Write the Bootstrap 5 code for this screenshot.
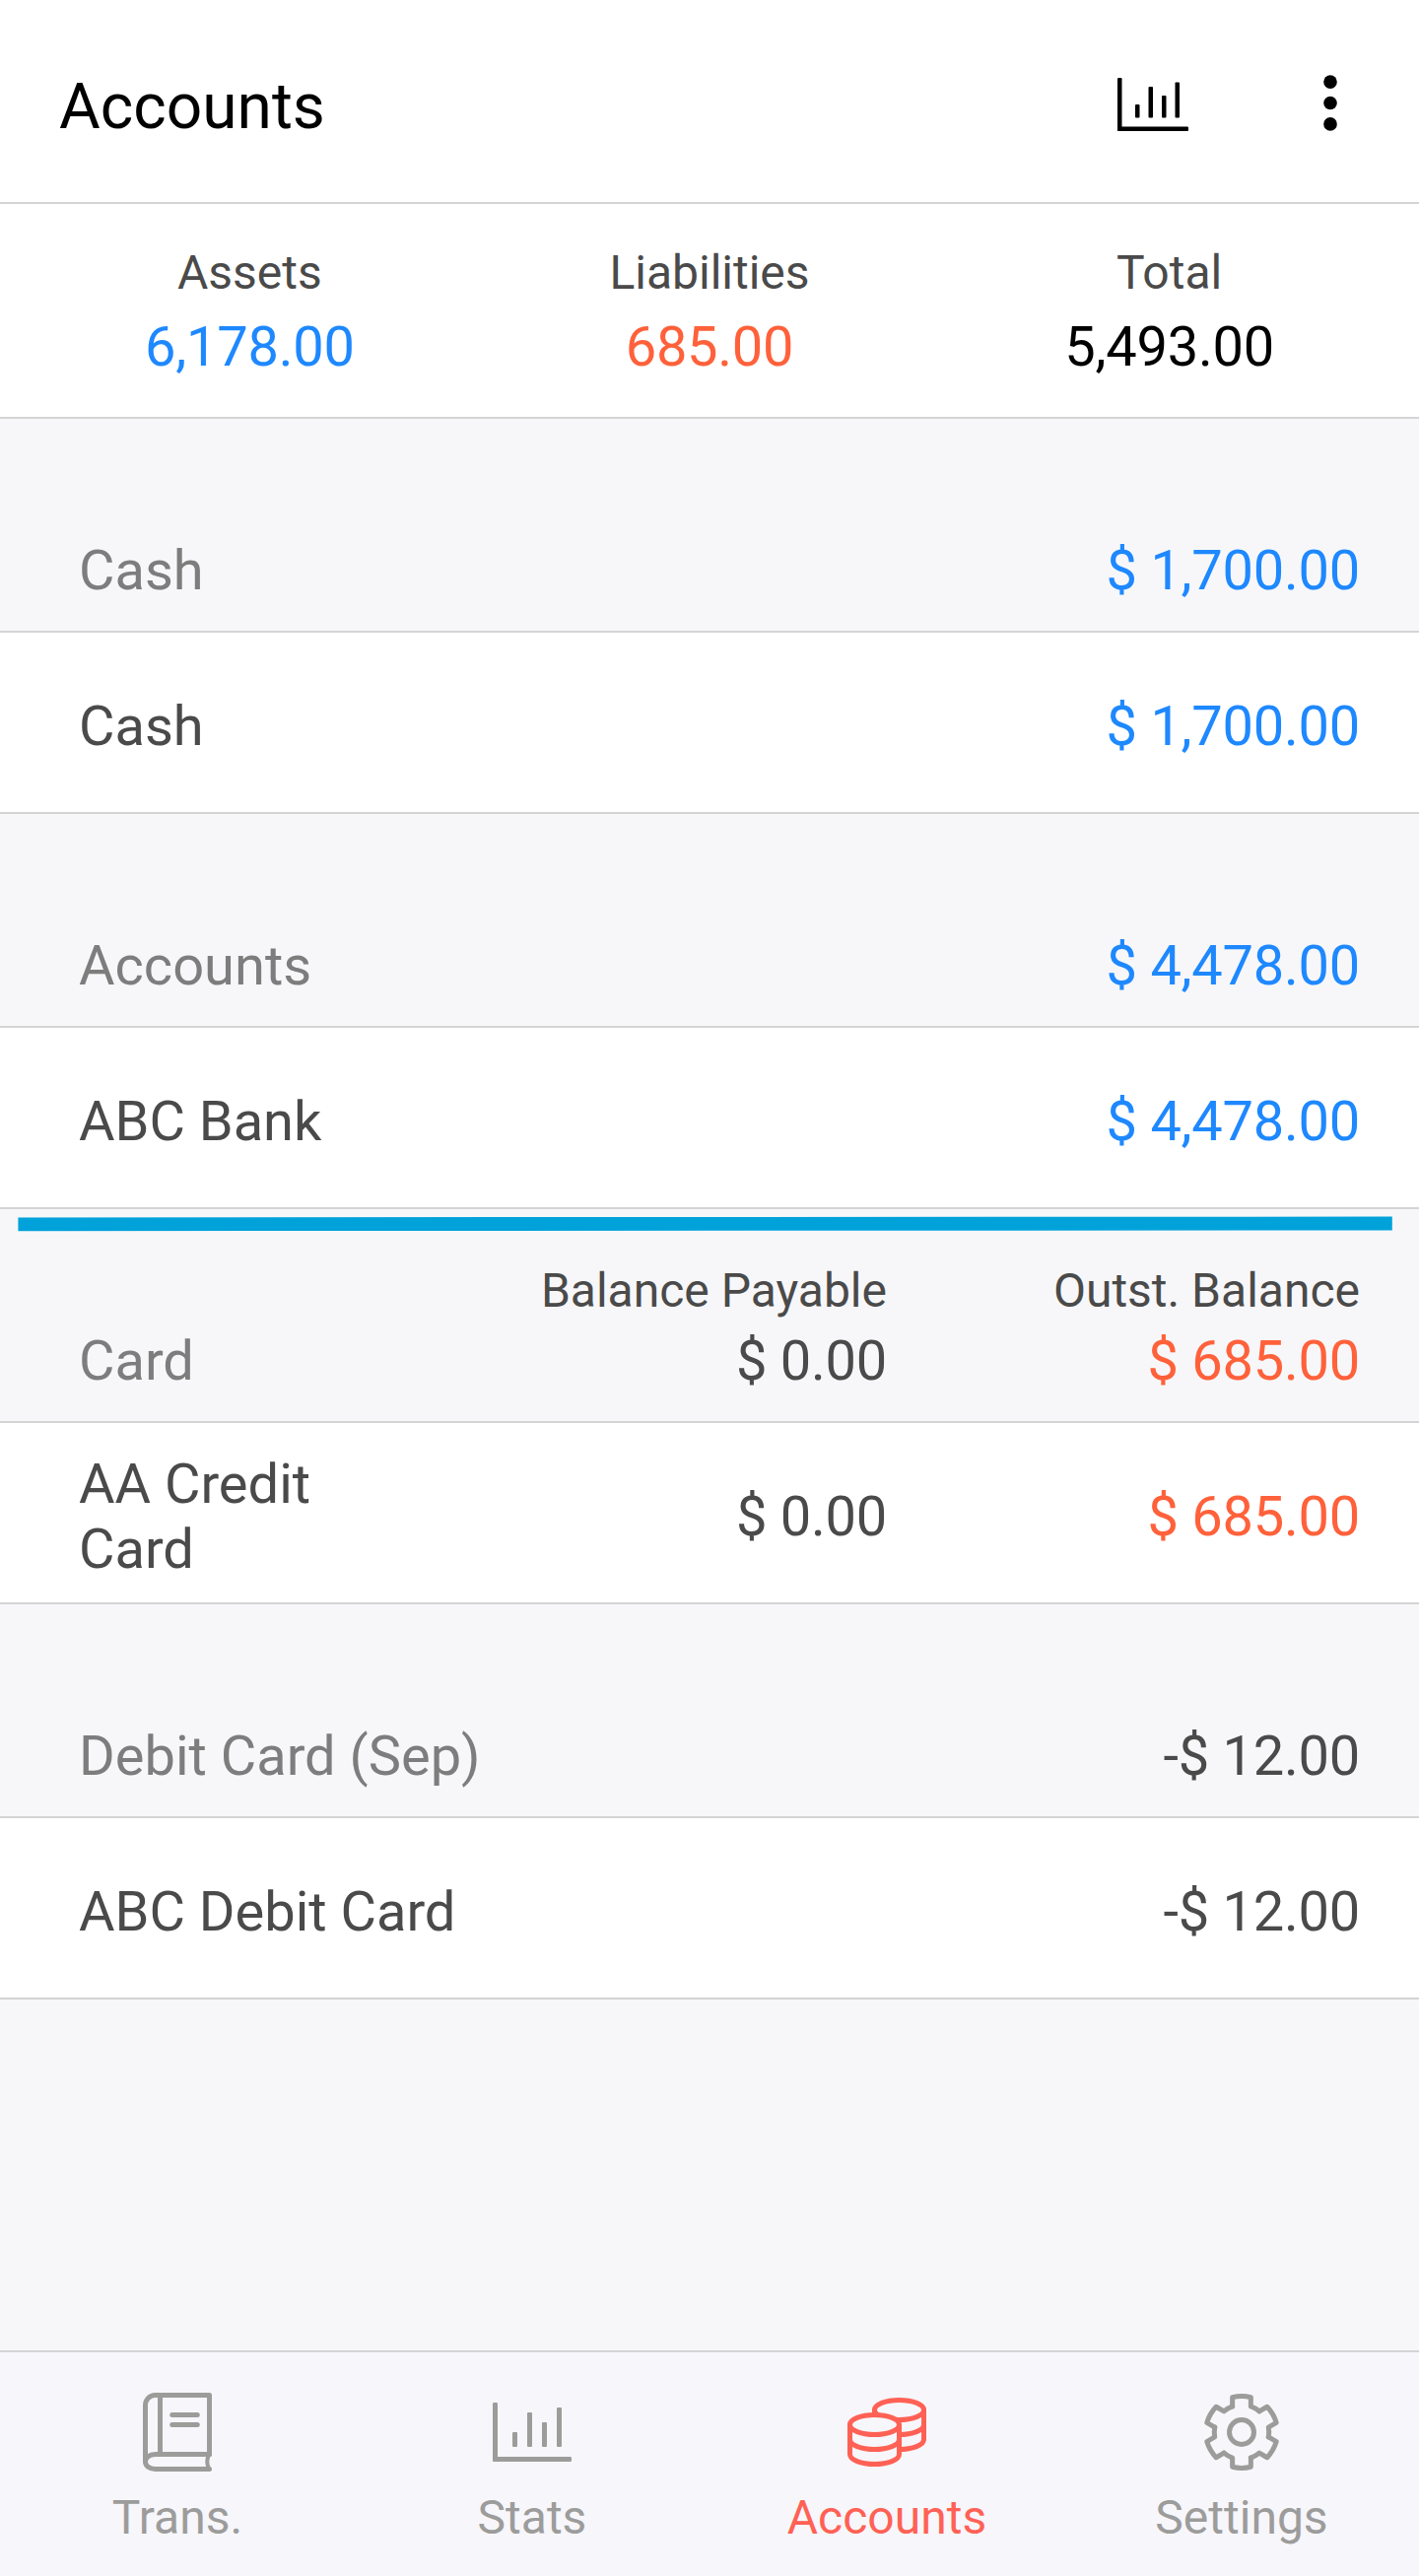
<!DOCTYPE html>
<html lang="en">
<head>
<meta charset="utf-8">
<meta name="viewport" content="width=device-width, initial-scale=1">
<title>Accounts</title>
<link href="https://cdn.jsdelivr.net/npm/bootstrap@5.3.0/dist/css/bootstrap.min.css" rel="stylesheet">
<style>
  :root { --line: #d4d4d5; --ink: #4a4a4a; --muted: #7d7d7d; --blue: #1e88ff; --orange: #ff613b; --coral: #ff6155; --tab: #9c9c9b; --tabbar: #f7f6fb; }
  body { font-family: Roboto, "Liberation Sans", sans-serif; font-size: 56px; line-height: 66px; color: var(--ink); background: #f7f7f9; }
  svg { display: block; }
  .screen { height: 2614px; overflow: hidden; }
  .ruled { border-bottom: 2px solid var(--line); }
  .top-bar { height: 207px; padding-left: 60px; color: #000; }
  .top-title { font-size: 64px; line-height: 75px; font-weight: 400; padding-top: 11px; }
  .top-action { width: 180px; color: #000; }
  .top-action.chart { padding-top: 7px; }
  .top-action.more { padding-top: 3px; }
  .totals { height: 218px; padding: 42px 20px 0; }
  .caption { font-size: 48px; line-height: 56px; white-space: nowrap; }
  .totals .caption { margin-bottom: 14px; }
  .group-head { height: 217px; padding: 0 60px 28px 80px; color: var(--muted); }
  .entry { height: 184px; padding: 8px 60px 0 80px; }
  .name-slot { width: 340px; }
  .sum-slot { width: 480px; }
  .sum-slot .caption { margin-bottom: 10px; }
  .amount { letter-spacing: -.25px; }
  .blue { color: var(--blue); }
  .orange { color: var(--orange); }
  .ink { color: var(--ink); }
  .divider-mark { left: 18px; top: 7px; }
  .tab-bar { height: 229px; border-top: 2px solid var(--line); background: var(--tabbar); }
  .tab-item { padding-top: 41px; gap: 19px; color: var(--tab); font-size: 48px; line-height: 56px; text-decoration: none; }
  .tab-item.current { color: var(--coral); }
</style>
<script src="https://cdn.jsdelivr.net/npm/bootstrap@5.3.0/dist/js/bootstrap.bundle.min.js"></script>
</head>
<body>
<svg width="0" height="0" class="position-absolute" aria-hidden="true">
  <symbol id="chart" viewBox="0 0 16 12">
    <g fill="currentColor"><rect width="1" height="12" rx=".25"/><rect y="11" width="16" height="1" rx=".25"/><rect x="4" y="6" width="1" height="3" rx=".2"/><rect x="7" y="2" width="1" height="7" rx=".2"/><rect x="10" y="4" width="1" height="5" rx=".2"/><rect x="13" y="1" width="1" height="8" rx=".2"/></g>
  </symbol>
</svg>
<div class="screen d-flex flex-column">
  <header class="top-bar ruled bg-white d-flex align-items-center">
    <h1 class="top-title mb-0 me-auto">Accounts</h1>
    <div class="top-action chart d-flex justify-content-center"><svg width="72" height="54"><use href="#chart"/></svg></div>
    <div class="top-action more d-flex justify-content-center">
      <svg width="14" height="57" viewBox="0 0 14 57" fill="currentColor"><circle cx="7" cy="7.1" r="6.8"/><circle cx="7" cy="28.5" r="6.8"/><circle cx="7" cy="49.9" r="6.8"/></svg>
    </div>
  </header>

  <section class="totals ruled bg-white">
    <div class="row g-0 text-center">
      <div class="col-4"><div class="caption">Assets</div><div class="amount blue">6,178.00</div></div>
      <div class="col-4"><div class="caption">Liabilities</div><div class="amount orange">685.00</div></div>
      <div class="col-4"><div class="caption">Total</div><div class="amount text-black">5,493.00</div></div>
    </div>
  </section>

  <main class="flex-grow-1">
    <section>
      <div class="group-head ruled d-flex align-items-end justify-content-between"><span>Cash</span><span class="amount blue">$ 1,700.00</span></div>
      <div class="entry ruled bg-white d-flex align-items-center justify-content-between"><span>Cash</span><span class="amount blue">$ 1,700.00</span></div>
    </section>
    <section>
      <div class="group-head ruled d-flex align-items-end justify-content-between"><span>Accounts</span><span class="amount blue">$ 4,478.00</span></div>
      <div class="entry ruled bg-white d-flex align-items-center justify-content-between"><span>ABC Bank</span><span class="amount blue">$ 4,478.00</span></div>
    </section>
    <section class="position-relative">
      <svg class="divider-mark position-absolute" width="1396" height="16" viewBox="0 0 1396 16"><path d="M.4 1.4 1394.8.6V14.4L.4 15.2z" fill="#01a2da"/></svg>
      <div class="group-head ruled d-flex align-items-end">
        <div class="name-slot">Card</div>
        <div class="sum-slot text-end ink"><div class="caption">Balance Payable</div><div class="amount">$ 0.00</div></div>
        <div class="sum-slot text-end ink"><div class="caption">Outst. Balance</div><div class="amount orange">$ 685.00</div></div>
      </div>
      <div class="entry ruled bg-white d-flex align-items-center">
        <div class="name-slot">AA Credit Card</div>
        <div class="sum-slot amount text-end">$ 0.00</div>
        <div class="sum-slot amount text-end orange">$ 685.00</div>
      </div>
    </section>
    <section>
      <div class="group-head ruled d-flex align-items-end justify-content-between"><span>Debit Card (Sep)</span><span class="amount ink">-$ 12.00</span></div>
      <div class="entry ruled bg-white d-flex align-items-center justify-content-between"><span>ABC Debit Card</span><span class="amount">-$ 12.00</span></div>
    </section>
  </main>

  <nav class="tab-bar nav nav-fill flex-nowrap">
    <a href="#" class="tab-item w-25 d-flex flex-column align-items-center">
      <svg width="80" height="80" viewBox="-1 0 16 16" fill="none" stroke="currentColor" stroke-linecap="round" stroke-linejoin="round">
        <path d="M13.5 12.5V.5h-11a2 2 0 0 0-2 2V14"/><path d="M3.5.5v12" stroke-linecap="butt"/>
        <path d="M13.5 12.5h-11C1.3 12.5.5 13.2.5 14s.8 1.5 2 1.5h11"/><path d="M13.4 12.6q-.7 1.4 0 2.8" stroke-width=".8"/>
        <path d="M5.95 4.5h5.1M5.95 6.5h5.1"/>
      </svg>
      <span>Trans.</span>
    </a>
    <a href="#" class="tab-item w-25 d-flex flex-column align-items-center">
      <svg width="80" height="80"><use href="#chart"/></svg>
      <span>Stats</span>
    </a>
    <a href="#" class="tab-item current w-25 d-flex flex-column align-items-center">
      <svg width="80" height="80" viewBox="0 -1 16 16" fill="none" stroke="currentColor">
        <ellipse cx="10.5" cy="2.5" rx="5" ry="2"/>
        <path d="M5.5 2.5v6M15.5 2.5v6M5.5 5.5c0 1.1 2.24 2 5 2s5-.9 5-2M5.5 8.5c0 1.1 2.24 2 5 2s5-.9 5-2"/>
        <path d="M.5 5.5c0-1.1 2.24-2 5-2s5 .9 5 2v6c0 1.1-2.24 2-5 2s-5-.9-5-2z" fill="#f7f6fb"/>
        <path d="M.5 5.5c0 1.1 2.24 2 5 2s5-.9 5-2M.5 8.5c0 1.1 2.24 2 5 2s5-.9 5-2"/>
      </svg>
      <span>Accounts</span>
    </a>
    <a href="#" class="tab-item w-25 d-flex flex-column align-items-center">
      <svg width="80" height="80" viewBox="-8 -8 16 16" fill="none" stroke="currentColor" stroke-linecap="round" stroke-linejoin="round">
        <circle r="2.5"/>
        <path id="tooth" d="M-1.87-5.22V-7.06Q0-7.5 1.87-7.06V-5.22A5.55 5.55 0 0 1 3.59-4.23"/>
        <use href="#tooth" transform="rotate(60)"/><use href="#tooth" transform="rotate(120)"/><use href="#tooth" transform="rotate(180)"/><use href="#tooth" transform="rotate(240)"/><use href="#tooth" transform="rotate(300)"/>
      </svg>
      <span>Settings</span>
    </a>
  </nav>
</div>
</body>
</html>
